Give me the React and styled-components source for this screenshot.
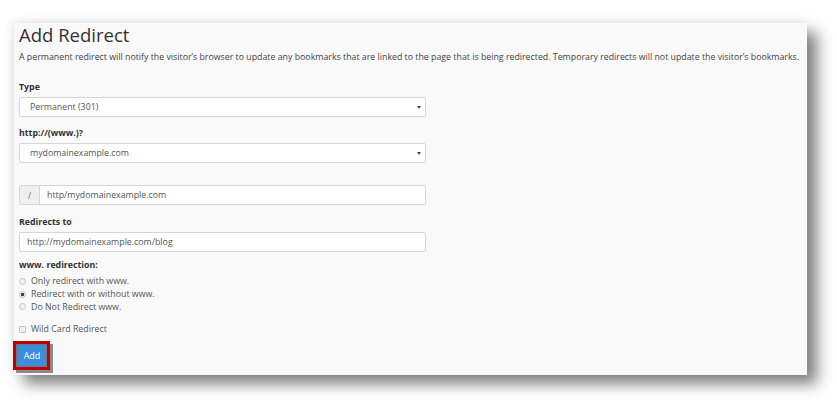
import styled, { createGlobalStyle } from "styled-components";

const GlobalStyle = createGlobalStyle`
  body {
    margin: 0;
    background: #ffffff;
    font-family: "Open Sans", "Liberation Sans", sans-serif;
    color: #333333;
  }
`;

const Page = styled.div`
  padding: 23px 0 0 14px;
  width: 837px;
  height: 400px;
  box-sizing: border-box;
  overflow: hidden;
`;

const Card = styled.div`
  width: 793px;
  height: 352px;
  box-sizing: border-box;
  background: #f9f9f9;
  padding: 1px 0 0 5px;
  box-shadow: 10px 9px 14px rgba(0, 0, 0, 0.5), -3px -2px 8px rgba(0, 0, 0, 0.07);
`;

const Title = styled.h1`
  margin: 0;
  font-size: 18.5px;
  line-height: 22px;
  font-weight: 400;
  color: #333;
`;

const Description = styled.p`
  margin: 4px 0 0;
  font-size: 8.8px;
  line-height: 14px;
  color: #444;
  white-space: nowrap;
`;

const Group = styled.div`
  margin-top: ${(p) => p.$gap}px;
  width: 407px;
`;

const Label = styled.div`
  font-size: 8.8px;
  line-height: 14px;
  font-weight: 700;
  color: #333;
  margin-bottom: 3px;
`;

const Field = styled.div`
  height: 20px;
  box-sizing: border-box;
  border: 1px solid #d6d6d6;
  border-radius: 2px;
  background: #fff;
  display: flex;
  align-items: center;
  font-size: 8.8px;
  color: #555;
  overflow: hidden;
`;

const FieldText = styled.span`
  flex: 1;
  padding-left: ${(p) => p.$pad}px;
`;

const Caret = styled.span`
  width: 0;
  height: 0;
  margin-right: 4px;
  border-left: 2px solid transparent;
  border-right: 2px solid transparent;
  border-top: 3px solid #444;
`;

const Addon = styled.span`
  width: 19px;
  align-self: stretch;
  background: #eeeeee;
  border-right: 1px solid #d6d6d6;
  display: flex;
  align-items: center;
  justify-content: center;
  color: #777;
  font-size: 8.5px;
`;

const Options = styled.div`
  margin-top: 1px;
  display: flex;
  flex-direction: column;
`;

const Option = styled.label`
  display: flex;
  align-items: center;
  height: 12.7px;
  font-size: 8.8px;
  color: #555;
  margin-top: ${(p) => p.$gap || 0}px;
`;

const Radio = styled.span`
  width: 5px;
  height: 5px;
  border-radius: 50%;
  border: 1px solid #c4c4c4;
  background: ${(p) => (p.$checked ? "radial-gradient(circle, #444 0 1.4px, #f0f0f0 1.9px)" : "#f0f0f0")};
  margin: 0 5px 0 0;
`;

const Check = styled.span`
  width: 5px;
  height: 5px;
  border-radius: 1px;
  border: 1px solid #c4c4c4;
  background: #f0f0f0;
  margin: 0 5px 0 0;
`;

const Highlight = styled.div`
  margin: 5px 0 0 -6px;
  width: 37px;
  height: 29px;
  box-sizing: border-box;
  border: 3px solid #c00000;
  background: #777777;
  padding: 1px;
  box-shadow: 3px 3px 0 #8a8a8a;
  display: flex;
`;

const AddButton = styled.button`
  margin: 0 0 1px 1px;
  width: 29px;
  height: 21px;
  border: none;
  background: #3b8ede;
  color: #fff;
  font-family: "Open Sans", "Liberation Sans", sans-serif;
  font-size: 9px;
  padding: 0;
  cursor: pointer;
`;

export default function App() {
  return (
    <>
      <GlobalStyle />
      <Page>
        <Card>
          <Title>Add Redirect</Title>
          <Description>
            A permanent redirect will notify the visitor’s browser to update any bookmarks that are linked to the page that is being redirected. Temporary redirects will not update the visitor’s bookmarks.
          </Description>

          <Group $gap={16}>
            <Label>Type</Label>
            <Field>
              <FieldText $pad={10}>Permanent (301)</FieldText>
              <Caret />
            </Field>
          </Group>

          <Group $gap={9}>
            <Label>http://(www.)?</Label>
            <Field>
              <FieldText $pad={10}>mydomainexample.com</FieldText>
              <Caret />
            </Field>
          </Group>

          <Group $gap={22}>
            <Field>
              <Addon>/</Addon>
              <FieldText $pad={7}>http/mydomainexample.com</FieldText>
            </Field>
          </Group>

          <Group $gap={10}>
            <Label>Redirects to</Label>
            <Field>
              <FieldText $pad={7}>http://mydomainexample.com/blog</FieldText>
            </Field>
          </Group>

          <Group $gap={6}>
            <Label>www. redirection:</Label>
            <Options>
              <Option>
                <Radio />
                Only redirect with www.
              </Option>
              <Option>
                <Radio $checked />
                Redirect with or without www.
              </Option>
              <Option>
                <Radio />
                Do Not Redirect www.
              </Option>
              <Option $gap={10}>
                <Check />
                Wild Card Redirect
              </Option>
            </Options>
          </Group>

          <Highlight>
            <AddButton>Add</AddButton>
          </Highlight>
        </Card>
      </Page>
    </>
  );
}
